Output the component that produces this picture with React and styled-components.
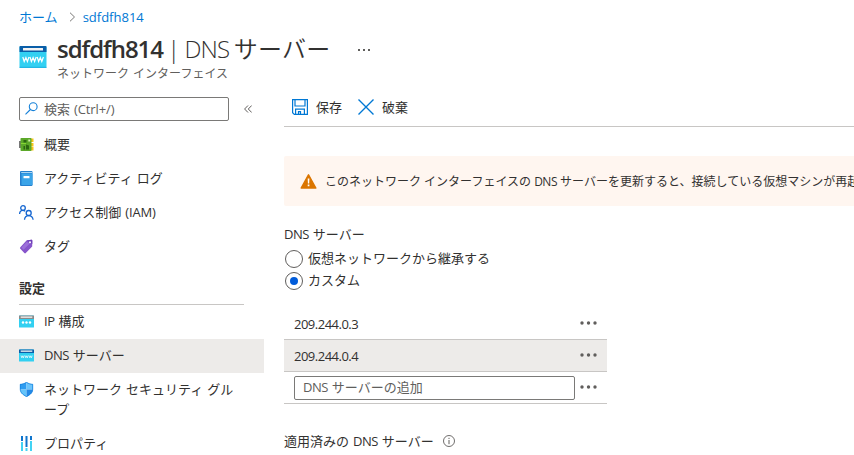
import React from "react";
import styled, { createGlobalStyle } from "styled-components";

const GlobalStyle = createGlobalStyle`
  * { box-sizing: border-box; }
  html, body { margin: 0; background: #fff; overflow: hidden; }
  body {
    font-family: "Open Sans", "Noto Sans CJK JP", sans-serif;
    font-size: 13px;
    font-weight: 400;
    word-spacing: 0.6px;
    color: #323130;
  }
`;

const Page = styled.div`
  width: 854px;
  height: 455px;
  overflow: hidden;
  background: #fff;
`;
const Latin = styled.span`
  font-weight: ${(p) => p.$weight || "inherit"};
  letter-spacing: ${(p) => p.$track ?? -0.5}px;
`;
const Breadcrumb = styled.nav`
  display: flex;
  align-items: center;
  height: 34px;
  padding-left: 19px;
  color: #0078d4;
  white-space: nowrap;
  svg { margin: 0 7px 0 11px; }
  > span:first-child { margin-top: -2px; }
`;
const Header = styled.header`
  display: flex;
  height: 54px;
  padding-left: 19px;
  > svg { margin-top: 12px; flex: none; }
`;
const Titles = styled.div`
  margin-left: 10px;
`;
const Title = styled.h1`
  margin: 0;
  height: 31px;
  line-height: 30px;
  font-size: 24px;
  font-weight: 350;
  letter-spacing: -0.4px;
  word-spacing: -1.4px;
  white-space: nowrap;
`;
const Subtitle = styled.div`
  height: 18px;
  line-height: 18px;
  font-size: 12px;
  color: #605e5c;
  word-spacing: 1px;
  white-space: nowrap;
`;
const MoreTitle = styled.div`
  display: flex;
  gap: 3px;
  margin: 15px 0 0 28px;
  height: 2px;
`;
const Pip = styled.i`
  width: 2px;
  height: 2px;
  background: #605e5c;
`;
const Body = styled.div`
  display: flex;
  height: 367px;
`;
const Sidebar = styled.aside`
  width: 264px;
  flex: none;
  padding-top: 9px;
`;
const SearchRow = styled.div`
  display: flex;
  align-items: center;
  height: 24px;
  margin: 0 0 7px 19px;
  > svg { margin-left: 15px; }
`;
const SearchBox = styled.div`
  display: flex;
  align-items: center;
  width: 210px;
  height: 24px;
  padding: 0 0 1px 5px;
  border: 1px solid #7a7977;
  border-radius: 2px;
  color: #605e5c;
  svg { margin-right: 6px; }
`;
const MenuItem = styled.div`
  display: flex;
  height: ${(p) => (p.$tall ? 54 : 34)}px;
  padding: 6px 10px 0 19px;
  line-height: 20px;
  background: ${(p) => (p.$active ? "#edebe9" : "transparent")};
  > svg { flex: none; margin: 3px 10px 0 0; }
`;
const SectionTitle = styled.div`
  display: flex;
  align-items: center;
  width: 225px;
  height: 41px;
  margin-left: 19px;
  padding-top: 7px;
  border-bottom: 1px solid #c8c6c4;
  font-weight: 600;
`;
const Main = styled.main`
  flex: 1;
  min-width: 0;
  padding-left: 20px;
`;
const Toolbar = styled.div`
  display: flex;
  align-items: center;
  height: 39px;
  padding: 0 0 0 8px;
  border-bottom: 1px solid #c8c6c4;
`;
const Command = styled.div`
  display: flex;
  align-items: center;
  margin-right: 16px;
  gap: 8px;
  span { margin-top: -2px; }
`;
const Banner = styled.div`
  display: flex;
  align-items: center;
  height: 50px;
  margin-top: 29px;
  padding-left: 16px;
  background: #fff6f0;
  border-radius: 2px 0 0 2px;
  font-size: 12px;
  word-spacing: 0;
  white-space: nowrap;
  overflow: hidden;
  svg { flex: none; margin-right: 8px; }
`;
const Label = styled.div`
  display: flex;
  align-items: center;
  gap: 9px;
  height: 20px;
  margin-top: ${(p) => p.$top}px;
  svg { margin-top: 2px; }
`;
const RadioGroup = styled.div`
  margin-top: 5px;
`;
const RadioRow = styled.div`
  display: flex;
  align-items: center;
  height: 22px;
  gap: 5px;
  > span:last-child { margin-top: -3px; }
`;
const Radio = styled.span`
  display: grid;
  place-items: center;
  width: 18px;
  height: 18px;
  margin-left: 1px;
  border: 1px solid #605e5c;
  border-radius: 50%;
  &::after {
    content: "";
    width: 8px;
    height: 8px;
    border-radius: 50%;
    background: ${(p) => (p.$checked ? "#015cda" : "transparent")};
  }
`;
const Table = styled.div`
  width: 323px;
  margin-top: 16px;
`;
const Row = styled.div`
  display: flex;
  align-items: center;
  justify-content: space-between;
  height: 32px;
  padding: 0 10px;
  border-bottom: 1px solid #c8c6c4;
  background: ${(p) => (p.$active ? "#edebe9" : "transparent")};
  > svg { margin-top: -2px; }
`;
const Field = styled.div`
  display: flex;
  align-items: center;
  width: 281px;
  height: 24px;
  padding: 0 0 2px 8px;
  border: 1px solid #7a7977;
  border-radius: 2px;
  color: #605e5c;
`;
const Address = styled.span`
  padding-top: 1px;
`;

const BrowserIcon = ({ size, kind }) => {
  const big = size > 20;
  const top = kind === "ip" ? "#8a8a8a" : "#0a5ea8";
  return (
    <svg width={size} height={big ? 23 : size} viewBox={big ? "0 0 28 23" : "0 0 15 15"}>
      {big ? (
        <>
          <rect x=".5" y="0" width="27" height="22" rx="1" fill="#32d0f2" />
          <path d="M.5 6V1a1 1 0 0 1 1-1h25a1 1 0 0 1 1 1v5z" fill={top} />
          <rect x="4" y="2" width="20" height="2.500" rx=".3" fill="#f3f3f3" />
          <rect x=".5" y="20.800" width="27" height="1.200" rx=".6" fill="#22b7e4" />
          <path d="M3.800 11l1.400 4.500L6.900 11.500l1.500 4L10 11M11 11l1.400 4.500 1.700-4 1.500 4L17.200 11M18.200 11l1.400 4.500 1.700-4 1.500 4L24.400 11" fill="none" stroke="#fff" strokeWidth="1.200" />
        </>
      ) : (
        <>
          <rect y="1.500" width="15" height="12" rx=".6" fill="#32d0f1" />
          <rect y="1.500" width="15" height="3.500" rx=".6" fill={top} />
          <rect x="1.700" y="2.500" width="11.600" height="1.300" fill="#f3f3f3" />
          {kind === "ip" ? (
            <g fill="#fff"><circle cx="4" cy="8.500" r="1.200" /><circle cx="7.500" cy="8.500" r="1.200" /><circle cx="11" cy="8.500" r="1.200" /></g>
          ) : (
            <path d="M2 7.500l.8 2.300.8-2 .8 2L5.200 7.500M6 7.500l.8 2.300.8-2 .8 2 .8-2.300M10 7.500l.8 2.300.8-2 .8 2 .8-2.300" fill="none" stroke="#fff" strokeWidth=".7" />
          )}
        </>
      )}
    </svg>
  );
};

const OverviewIcon = () => (
  <svg width="15" height="15" viewBox="0 0 15 15">
    <path d="M11 1.500h3.500v3.500H11zM11 6h3.500v3.500H11zM11 10h3.500v3.500H11z" fill="#f5c518" />
    <path d="M0 4h2v7H0z" fill="#777" />
    <rect x="1.500" y="1" width="11" height="13" rx=".8" fill="#5ba829" />
    <path d="M4.500 3h3v2.500h-3zM4.500 9h1.500v3.500H4.500zM7 7.500l3 1v4H7z" fill="#2b6612" />
    <path d="M9.300 2.500h1.900v2H9.300z" fill="#d5f0b0" />
    <path d="M2 6h5v1H2z" fill="#86d633" />
  </svg>
);
const LogIcon = () => (
  <svg width="15" height="15" viewBox="0 0 15 15">
    <rect x="1" y="0" width="12.500" height="15" rx="1" fill="#2580cf" />
    <path d="M2.500 2.500h11v11.500H2.500z" fill="#3ba4e8" />
    <path d="M2.200 1h10.800v.9H2.200z" fill="#b9dff7" />
    <rect x="4.500" y="5" width="6" height="2.300" rx=".3" fill="#fff" />
  </svg>
);
const PeopleIcon = () => (
  <svg width="15" height="15" viewBox="0 0 15 15" fill="none" stroke="#1566d0" strokeWidth="1.300">
    <circle cx="4" cy="3" r="2.300" />
    <path d="M.6 9c.1-2.300 1.400-3.600 3.200-3.600 1 0 1.700.3 2.300.9" />
    <circle cx="9.700" cy="8" r="2.500" />
    <path d="M5.500 14.800c.2-2.700 1.900-4.200 4.200-4.200s4.100 1.500 4.400 4.200" />
  </svg>
);
const TagIcon = () => (
  <svg width="15" height="15" viewBox="0 0 15 15">
    <path d="M7.500 1.500 12.300.8c.7 0 1 .3 1 1L13.200 7.500 6.800 14c-.5.5-1 .5-1.500 0L1.300 9.800c-.5-.5-.5-1 0-1.500z" fill="#8755cb" />
    <path d="M7.500 1.500 12.300.8c.7 0 1 .3 1 1L13.300 5z" fill="#6f40b8" />
    <path d="m7.500 3-5 5.500 2 2.300 6.500-6.500z" fill="#b18be8" opacity=".5" />
    <circle cx="11" cy="3.200" r="1" fill="#fff" />
  </svg>
);
const ShieldIcon = () => (
  <svg width="15" height="15" viewBox="0 0 15 15">
    <path d="M7.500 0v7.500H1V2c3 0 4-.6 6.500-2z" fill="#2e9cf0" />
    <path d="M7.500 0C10 1.400 11 2 14 2v5.500H7.500z" fill="#6cc5fb" />
    <path d="M1 7.500h6.500V15C3.500 12.800 1.200 10.800 1 7.500z" fill="#64c4fa" />
    <path d="M7.500 7.500H14c-.2 3.300-2.500 5.300-6.500 7.500z" fill="#2489e6" />
    <path d="M7.500.4C10 1.700 11.300 2.300 13.700 2.300v5c0 3-2.200 5.200-6.200 7.300C3.500 12.500 1.300 10.300 1.300 7.300v-5C3.700 2.300 5 1.700 7.500.4z" fill="none" stroke="#1782dd" strokeWidth=".8" />
  </svg>
);
const PropertiesIcon = () => (
  <svg width="15" height="15" viewBox="0 0 15 15">
    <path d="M2 0h2v5H2zM6.500 0h2v11h-2zM11 0h2v4h-2z" fill="#0f75cd" />
    <path d="M2 6h2v9H2zM6.500 12h2v3h-2zM11 5h2v10h-2z" fill="#42d3f4" />
  </svg>
);
const SearchIcon = () => (
  <svg width="13" height="13" viewBox="0 0 13 13" fill="none" stroke="#1580d8" strokeWidth="1.100">
    <circle cx="8.200" cy="4.700" r="3.900" /><path d="M5.400 7.500.5 12.400" />
  </svg>
);
const CollapseIcon = () => (
  <svg width="8" height="8" viewBox="0 0 8 8" fill="none" stroke="#605e5c">
    <path d="M4 .5.600 4 4 7.500M7.700.5 4.300 4l3.400 3.500" />
  </svg>
);
const SaveIcon = () => (
  <svg width="16" height="16" viewBox="0 0 16 16" fill="none" stroke="#0078d4" strokeWidth="1.200">
    <path d="M.6.600h14.800v14.800H2.300L.6 13.700zM3 .6v6.400h10V.6M3.600 15.400v-5.200h8.800v5.200M6.500 15v-2.300h2V15" />
  </svg>
);
const DiscardIcon = () => (
  <svg width="16" height="16" viewBox="0 0 16 16" stroke="#0078d4" strokeWidth="1.400">
    <path d="m.5.5 15 15M15.500.500.500 15.500" />
  </svg>
);
const WarningIcon = () => (
  <svg width="17" height="15" viewBox="0 0 17 15">
    <path d="M8.500.8 15.800 14H1.200z" fill="#db7500" stroke="#db7500" strokeWidth="1.500" strokeLinejoin="round" />
    <path d="M7.700 4.500h1.700L9.200 9.500H7.900zM7.700 10.500h1.700v1.700H7.700z" fill="#fff" />
  </svg>
);
const InfoIcon = () => (
  <svg width="12" height="12" viewBox="0 0 12 12" fill="none" stroke="#605e5c">
    <circle cx="6" cy="6" r="5.500" strokeWidth=".9" /><path d="M6 5v4.200M6 2.800v1.200" />
  </svg>
);
const MoreIcon = () => (
  <svg width="17" height="4" viewBox="0 0 17 4" fill="#605e5c">
    <circle cx="2" cy="2" r="1.700" /><circle cx="8.500" cy="2" r="1.700" /><circle cx="15" cy="2" r="1.700" />
  </svg>
);

export default function App() {
  return (
    <Page>
      <GlobalStyle />
      <Breadcrumb>
        <span>ホーム</span>
        <svg width="7" height="10" viewBox="0 0 7 10" fill="none" stroke="#7a7977"><path d="m1 .7 4.500 4.300L1 9.300" /></svg>
        <Latin $track={0}>sdfdfh814</Latin>
      </Breadcrumb>
      <Header>
        <BrowserIcon size={28} kind="dns" />
        <Titles>
          <Title><Latin $weight={600} $track={-1.05}>sdfdfh814</Latin> | <Latin $track={-0.8}>DNS</Latin>{" "}<Latin $track={0.2}>サーバー</Latin></Title>
          <Subtitle>ネットワーク インターフェイス</Subtitle>
        </Titles>
        <MoreTitle><Pip /><Pip /><Pip /></MoreTitle>
      </Header>
      <Body>
        <Sidebar>
          <SearchRow>
            <SearchBox><SearchIcon /><span>検索 <Latin $track={-0.1}>(Ctrl+/)</Latin></span></SearchBox>
            <CollapseIcon />
          </SearchRow>
          <MenuItem><OverviewIcon /><span>概要</span></MenuItem>
          <MenuItem><LogIcon /><span>アクティビティ ログ</span></MenuItem>
          <MenuItem><PeopleIcon /><span>アクセス制御 <Latin $track={-0.2}>(IAM)</Latin></span></MenuItem>
          <MenuItem><TagIcon /><span>タグ</span></MenuItem>
          <SectionTitle>設定</SectionTitle>
          <MenuItem><BrowserIcon size={15} kind="ip" /><span><Latin>IP</Latin> 構成</span></MenuItem>
          <MenuItem $active><BrowserIcon size={15} kind="dns" /><span><Latin>DNS</Latin> サーバー</span></MenuItem>
          <MenuItem $tall><ShieldIcon /><span>ネットワーク セキュリティ グル<br />ープ</span></MenuItem>
          <MenuItem><PropertiesIcon /><span>プロパティ</span></MenuItem>
        </Sidebar>
        <Main>
          <Toolbar>
            <Command><SaveIcon /><span>保存</span></Command>
            <Command><DiscardIcon /><span>破棄</span></Command>
          </Toolbar>
          <Banner>
            <WarningIcon />
            <span>このネットワーク インターフェイスの <Latin $track={-0.5}>DNS</Latin> サーバーを更新すると、接続している仮想マシンが再起</span>
          </Banner>
          <Label $top={17}><span><Latin>DNS</Latin> サーバー</span></Label>
          <RadioGroup>
            <RadioRow><Radio /><span>仮想ネットワークから継承する</span></RadioRow>
            <RadioRow><Radio $checked /><span>カスタム</span></RadioRow>
          </RadioGroup>
          <Table>
            <Row><Address><Latin>209.244.0.3</Latin></Address><MoreIcon /></Row>
            <Row $active><Address><Latin>209.244.0.4</Latin></Address><MoreIcon /></Row>
            <Row><Field><span><Latin>DNS</Latin> サーバーの追加</span></Field><MoreIcon /></Row>
          </Table>
          <Label $top={26}><span>適用済みの <Latin>DNS</Latin> サーバー</span><InfoIcon /></Label>
        </Main>
      </Body>
    </Page>
  );
}
